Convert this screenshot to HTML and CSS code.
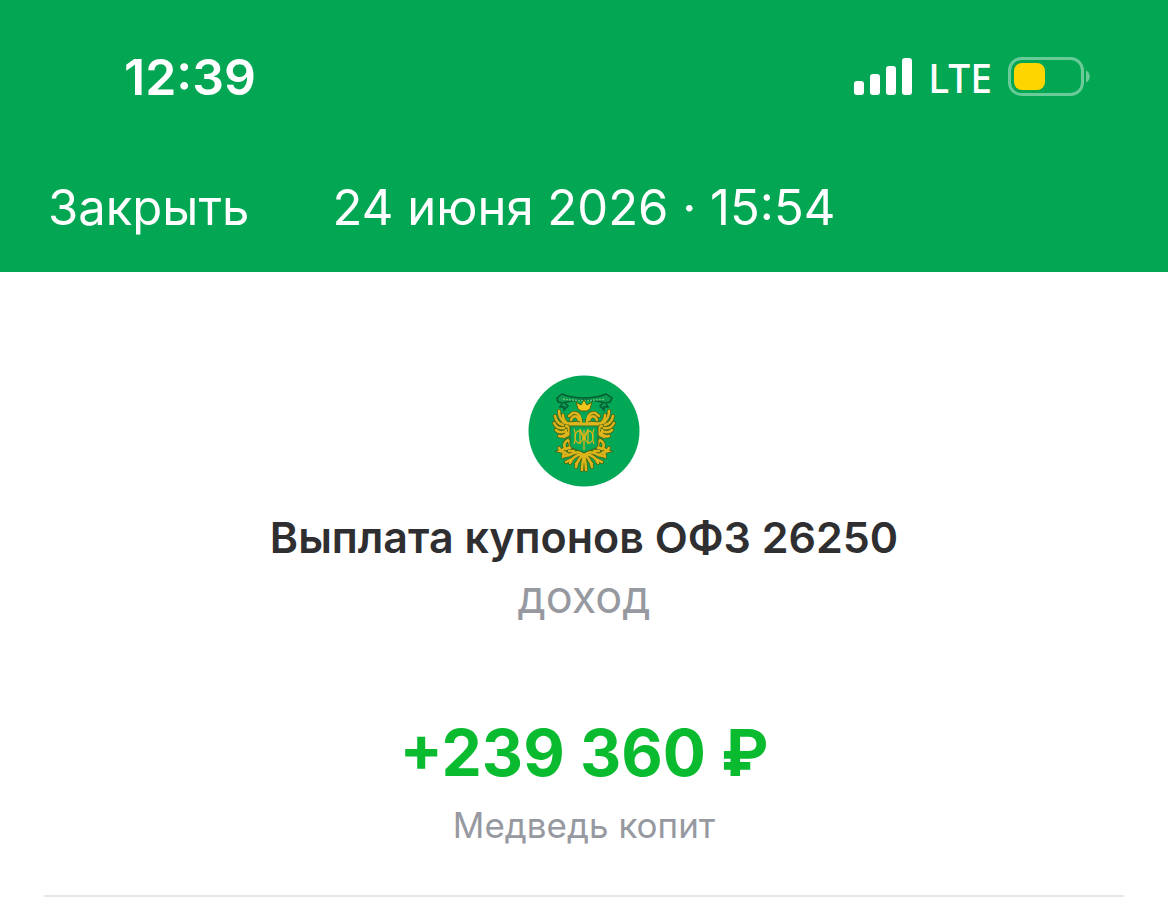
FILE: index.html
```html
<!DOCTYPE html>
<html lang="ru">
  <head>
    <meta charset="utf-8">
    <meta name="viewport" content="width=device-width, initial-scale=1">
    <title>Выплата купонов</title>
    <link rel="stylesheet" href="styles.css">
  </head>
  <body>
    <header class="header">
      <div class="status-bar">
        <span class="time">12:39</span>
        <div class="status-icons">
          <svg class="signal" viewBox="0 0 58 38" aria-hidden="true">
            <rect x="0" y="23" width="10" height="14" rx="3"/>
            <rect x="16" y="16" width="10" height="21" rx="3"/>
            <rect x="32" y="8" width="10" height="29" rx="3"/>
            <rect x="48" y="0" width="10" height="37" rx="3"/>
          </svg>
          <span class="network">LTE</span>
          <svg class="battery" viewBox="0 0 84 40" aria-hidden="true">
            <rect class="battery-case" x="1.5" y="1.5" width="73" height="36" rx="12"/>
            <rect class="battery-level" x="6" y="6" width="31" height="27" rx="8"/>
            <path class="battery-tip" d="M78 13.500c5 2 5 10 0 12z"/>
          </svg>
        </div>
      </div>
      <nav class="nav">
        <button class="close" type="button">Закрыть</button>
        <time class="date" datetime="2026-06-24T15:54">24 июня 2026 · 15:54</time>
      </nav>
    </header>
    <main class="operation">
      <svg class="emblem" viewBox="8 9 112 112" aria-hidden="true">
        <defs>
          <!-- left half of the eagle, the right half mirrors it -->
          <g id="half">
            <path d="M39 45c0 5 1 8 5 11M35 50c1 5 3 8 8 9M34 57c2 4 5 6 10 5M36 64c3 3 6 3 10 1M39 70c3 1 6 0 9-3M43 49c0 3 1 6 4 8M44 71l4-2"/>
            <path d="M43 56c5 3 9 1 15 1M46 60c3 0 4 5 3 8M46 64v4"/>
            <path d="M61 56c0-5-3-10-8-9l-4 3M59 54c-2-5-6-5-8 0M58 48l3 4"/>
            <path d="M48 74c-4 2-5 6-2 9l5-2-2-6M50 77v5M44 83l-4 2 4 1-1 5M44 86l5 3M39 82l2 3"/>
            <path d="M63 88c-5-3-9-1-14 1l-4 1M62 88c-6 1-10 4-12 9M63 89c-4 3-6 7-7 12M64 89c-1 5-2 9-2 15M54 85l-5 0M52 93l-6 3M58 86l3 1M59 94l-3 4"/>
          </g>
        </defs>
        <circle class="emblem-bg" cx="64" cy="65" r="55.500"/>
        <path class="ribbon" d="M37 32l5-4c7 3 13 4 22 4s15-1 22-4l6 4-2 4-5 1c-6-2-12-3-21-3s-15 1-21 3l-5-1z"/>
        <path class="ribbon-text" d="M43 33c14 2 28 2 42 0"/>
        <path class="ribbon" d="M42 38l-2 3h4v3l4-4-3-3M86 38l2 3h-4v3l-4-4 3-3"/>
        <g class="eagle-outline">
          <use href="#half"/>
          <use href="#half" transform="matrix(-1 0 0 1 128 0)"/>
        </g>
        <g class="eagle">
          <use href="#half"/>
          <use href="#half" transform="matrix(-1 0 0 1 128 0)"/>
        </g>
        <path class="crown" d="M58 43l-2-7 5 3 3-5 3 5 5-3-2 7-3 2h-6z"/>
        <circle class="emblem-bg" cx="64" cy="50" r="3"/>
        <!-- shield with the ministry monogram -->
        <path class="shield" d="M50 60h28v19c0 4-9 5-14 8-5-3-14-4-14-8z"/>
        <path class="shield-top" d="M49 58h30"/>
        <g class="monogram">
          <ellipse cx="59" cy="71" rx="4" ry="6"/>
          <ellipse cx="69" cy="71" rx="4" ry="6"/>
          <path d="M64 64v20M54 63c2 5 2 10 0 15M74 63c-2 5-2 10 0 15M60 63l4 11 4-11M60 63v15M68 63v15"/>
        </g>
      </svg>
      <h1 class="title">Выплата купонов ОФЗ 26250</h1>
      <p class="category">доход</p>
      <p class="amount">+239 360 ₽</p>
      <p class="account">Медведь копит</p>
      <hr class="divider">
    </main>
  </body>
</html>
```
FILE: styles.css
```css
* {
  box-sizing: border-box;
}

body {
  margin: 0;
  background-color: #fff;
  font-family: Inter, "Liberation Sans", sans-serif;
}

.header {
  padding: 43px 48px 30px;
  background-color: #03a653;
  color: #fff;
}

.status-bar {
  display: flex;
  justify-content: space-between;
  align-items: center;
  height: 68px;
  padding: 0 28px 0 76px;
}

.time {
  font-size: 50px;
  font-weight: 600;
}

.status-icons {
  display: flex;
  align-items: center;
  gap: 16px;
}

.signal {
  width: 58px;
  height: 38px;
  fill: #fff;
}

.network {
  font-family: "Noto Sans", sans-serif;
  font-size: 39px;
  font-weight: 500;
}

.battery {
  width: 84px;
  height: 40px;
}

.battery-case {
  fill: none;
  stroke: #68cb98;
  stroke-width: 3;
}

.battery-level {
  fill: #ffd500;
}

.battery-tip {
  fill: #68cb98;
}

.nav {
  display: grid;
  grid-template-columns: 1fr auto 1fr;
  align-items: center;
  margin-top: 63px;
  line-height: 68px;
}

.close {
  justify-self: start;
  padding: 0;
  border: none;
  background: none;
  color: inherit;
  font: inherit;
  font-size: 49px;
  cursor: pointer;
}

.date {
  font-size: 49px;
}

.operation {
  display: flex;
  flex-direction: column;
  align-items: center;
  padding: 103px 44px 0;
  text-align: center;
}

.emblem {
  width: 112px;
  height: 112px;
}

.emblem-bg {
  fill: #03a856;
}

.ribbon {
  fill: #099c50;
  stroke: #075b32;
  stroke-width: 1.5;
}

.ribbon-text {
  fill: none;
  stroke: #63c76d;
  stroke-width: 1.5;
  stroke-dasharray: 2 1;
}

.eagle-outline {
  fill: none;
  stroke: #4c6515;
  stroke-width: 4;
  stroke-linecap: round;
}

.eagle {
  fill: none;
  stroke: #dcb51c;
  stroke-width: 2.5;
  stroke-linecap: round;
}

.crown {
  fill: #f0c51c;
  stroke: #4c6515;
  stroke-width: 1;
}

.shield {
  fill: #03a856;
  stroke: #4c6515;
  stroke-width: 1;
}

.shield-top {
  stroke: #dcb51c;
  stroke-width: 3;
}

.monogram {
  fill: none;
  stroke: #d8b51d;
  stroke-width: 1.3;
}

.title,
.category,
.amount,
.account {
  margin: 0;
}

.title {
  margin-top: 20px;
  color: #2f2f31;
  font-size: 43px;
  font-weight: 600;
  line-height: 60px;
}

.category {
  color: #96999f;
  font-size: 45px;
  line-height: 60px;
}

.amount {
  margin-top: 86px;
  color: #0abb30;
  font-size: 64px;
  font-weight: 700;
  line-height: 80px;
}

.account {
  margin-top: 10px;
  color: #96999f;
  font-size: 35px;
  line-height: 44px;
}

.divider {
  width: 100%;
  margin: 48px 0 0;
  border: none;
  border-top: 2px solid #e7e7e9;
}
```
